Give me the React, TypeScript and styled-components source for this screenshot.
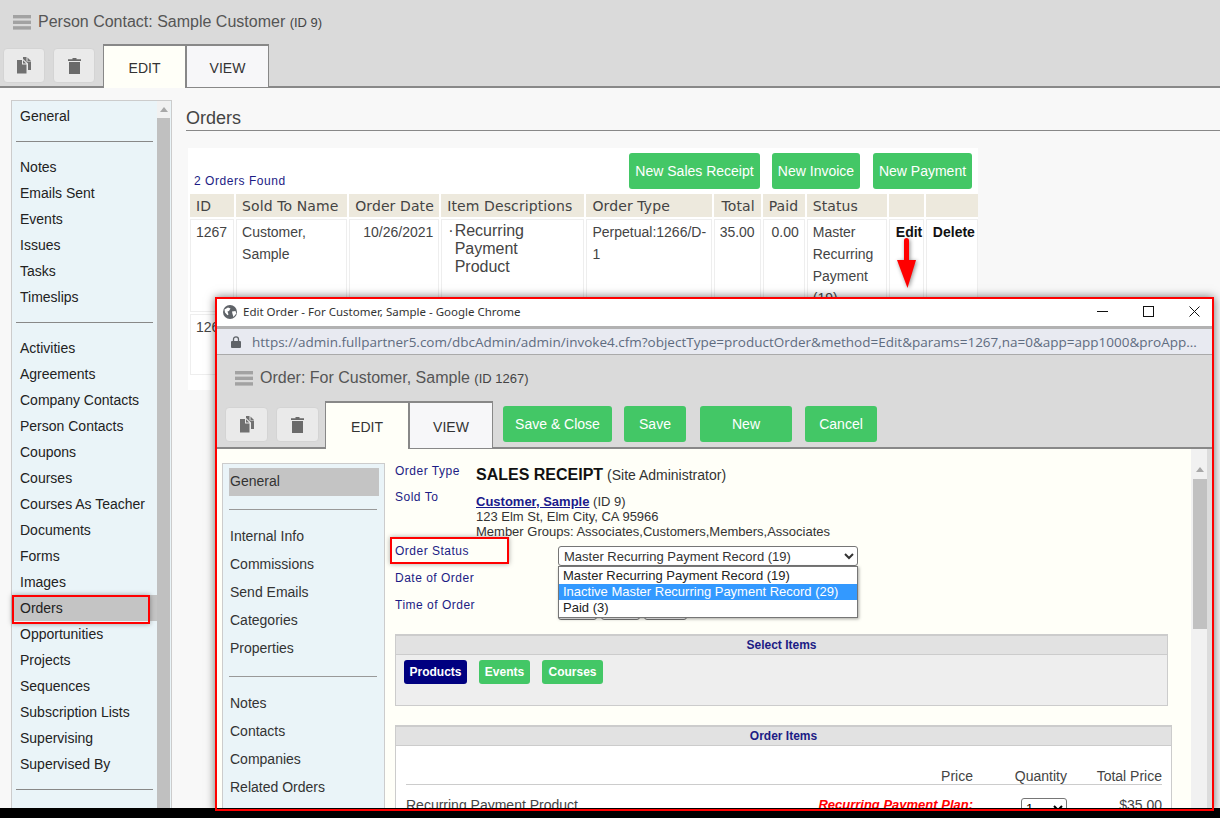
import styled, {createGlobalStyle} from "styled-components";
import {Fragment} from "react";

const GREEN = "#43c766";
const NAVY = "#1c1c85";

const GlobalStyle = createGlobalStyle`
  html, body {
    margin: 0;
    padding: 0;
    background: #000;
    font-family: "Liberation Sans", Arial, sans-serif;
    color: #333;
  }
  * { box-sizing: border-box; }
`

const Page = styled.div`
  position: relative;
  width: 1220px;
  height: 818px;
  background: #000;
  overflow: hidden;
`

const Screen = styled.div`
  width: 1220px;
  height: 808px;
  background: #f8f8f8;
  overflow: hidden;
  display: flex;
  flex-direction: column;
`

const Header = styled.header`
  flex: none;
  background: #dadada;
  border-bottom: 2px solid #888;
  height: 88px;
`

const HeaderCompact = styled(Header)`
  height: 94px;
`

const TitleRow = styled.div`
  display: flex;
  align-items: center;
  gap: 7px;
  height: 44px;
  padding-left: 13px;
  font-size: 16px;
  color: #555;
`

const PopupTitleRow = styled(TitleRow)`
  height: 46px;
  padding-left: 18px;
  gap: 7px;
`

const IdNote = styled.span`
  font-size: 13px;
  color: #444;
`

const TabRow = styled.div`
  display: flex;
  align-items: flex-end;
  height: 42px;
  padding-left: 3px;
`

const PopupTabRow = styled(TabRow)`
  height: 46px;
  padding-left: 8px;
`

const IconButton = styled.button`
  width: 42px;
  height: 35px;
  margin: 0 8px 3px 0;
  padding: 0;
  border: 1px solid #d4d4d4;
  border-radius: 4px;
  background: #eaeaea;
  display: flex;
  align-items: center;
  justify-content: center;
`

const PopupIconButton = styled(IconButton)`
  width: 43px;
  margin-bottom: 5px;

  &:nth-child(2) {
    margin-right: 6px;
  }
`

const Tab = styled.div<{$active?: boolean}>`
  width: 83px;
  height: 44px;
  margin-bottom: -2px;
  border: 1px solid #888;
  border-top-width: 2px;
  border-bottom: ${p => p.$active ? "none" : "1px solid #888"};
  background: ${p => p.$active ? "#fffff8" : "#f7f7f9"};
  color: #333;
  font-size: 14px;
  display: flex;
  align-items: center;
  justify-content: center;
  padding-top: 2px;
`

const PopupTab = styled(Tab)`
  height: 48px;
  width: 84px;
`

const GreenButton = styled.button<{$w: number; $gap?: number}>`
  width: ${p => p.$w}px;
  height: 36px;
  margin-left: ${p => p.$gap ?? 0}px;
  border: none;
  border-radius: 3px;
  background: ${GREEN};
  color: #fff;
  font: 14px "Liberation Sans", Arial, sans-serif;
  padding: 0;
`

const PopupActions = styled.div`
  display: flex;
  margin: 0 0 5px 10px;
`

const Body = styled.div`
  flex: 1;
  display: flex;
  padding: 12px 0 0 11px;
  min-height: 0;
`

const SideNav = styled.nav`
  flex: none;
  position: relative;
  width: 161px;
  height: 730px;
  border: 1px solid #ccc;
  background: #eaf4f8;
  font-size: 14px;
  color: #222;
  padding: 2px 14px 0 0;
`

const SideScroll = styled.div`
  position: absolute;
  top: 0;
  right: 1px;
  width: 13px;
  height: 100%;
  background: #f1f1f1;
  display: flex;
  flex-direction: column;
  align-items: center;
  padding-top: 6px;
`

const ScrollUp = styled.div`
  width: 0;
  height: 0;
  border-left: 4px solid transparent;
  border-right: 4px solid transparent;
  border-bottom: 5px solid #a8a8a8;
`

const SideThumb = styled.div`
  flex: 1;
  width: 13px;
  margin-top: 6px;
  background: #c0c0c0;
`

const NavItem = styled.div<{$selected?: boolean}>`
  height: 26px;
  line-height: 26px;
  margin-left: 2px;
  padding-left: 6px;
  white-space: nowrap;
  background: ${p => p.$selected ? "#c4c4c4" : "transparent"};
`

const NavRule = styled.div`
  height: 1px;
  margin: 12px 4px 12px 4px;
  background: #888;
`

const MainPane = styled.main`
  flex: 1;
  padding-left: 14px;
  min-width: 0;
`

const PaneTitle = styled.h2`
  margin: 0;
  height: 31px;
  line-height: 36px;
  border-bottom: 1px solid #888;
  font-size: 18px;
  font-weight: 400;
  color: #444;
`

const OrdersCard = styled.section`
  width: 790px;
  height: 242px;
  margin: 17px 0 0 2px;
  background: #fff;
  padding: 5px 0 0 0;
`

const OrdersTop = styled.div`
  display: flex;
  align-items: flex-end;
  height: 36px;
`

const FoundNote = styled.div`
  flex: 1;
  padding-left: 6px;
  font-size: 12px;
  letter-spacing: 0.55px;
  color: ${NAVY};
  line-height: 14px;
  margin-bottom: 1px;
`

const OrdersActions = styled.div`
  display: flex;
  margin-right: 6px;
`

const OrdersTable = styled.table`
  margin-top: 3px;
  border-collapse: separate;
  border-spacing: 2px 2px;
  table-layout: fixed;
  width: 792px;
`

const HeadCell = styled.th<{$right?: boolean}>`
  height: 23px;
  padding: 0 6px;
  background: #ede9dd;
  font: 400 14px "DejaVu Sans", Verdana, sans-serif;
  letter-spacing: 0.1px;
  color: #444;
  text-align: ${p => p.$right ? "right" : "left"};
  white-space: nowrap;
`

const Cell = styled.td<{$right?: boolean; $h?: number}>`
  height: ${p => p.$h ?? 93}px;
  padding: 1px 5px;
  vertical-align: top;
  border: 1px solid #eee;
  font-size: 14px;
  line-height: 22px;
  color: #444;
  text-align: ${p => p.$right ? "right" : "left"};
`

const ActionCell = styled(Cell)`
  padding: 1px 2px 1px 6px;
  font-weight: 700;
  color: #111;
`

const ItemLine = styled.div`
  display: flex;
  gap: 1px;
  font-size: 16px;
  line-height: 18px;
  padding: 1px 0 0 1px;
`

const ItemText = styled.span`
  width: 90px;
`

const Popup = styled.div`
  position: absolute;
  left: 215px;
  top: 297px;
  width: 999px;
  height: 514px;
  border: 2px solid #f00;
  box-shadow: 0 0 9px rgba(0, 0, 0, 0.55);
  background: #000;
  display: flex;
  flex-direction: column;
  overflow: hidden;
`

const PopupInner = styled.div`
  height: 509px;
  background: #d9d9d9;
  overflow: hidden;
  display: flex;
  flex-direction: column;
`

const WindowBar = styled.div`
  flex: none;
  height: 30px;
  background: #fff;
  border-bottom: 3px solid #b2b2b2;
  display: flex;
  align-items: center;
  padding: 0 0 2px 6px;
  gap: 10px;
  font: 11.5px "Noto Sans", "Open Sans", sans-serif;
  color: #333;
`

const WindowTitle = styled.span`
  flex: 1;
  margin-left: -4px;
`

const WindowControl = styled.span`
  width: 36px;
  display: flex;
  justify-content: center;
`

const UrlBar = styled.div`
  flex: none;
  height: 26px;
  background: #e8eaf1;
  border-bottom: 1px solid #aaa;
  display: flex;
  align-items: center;
  gap: 11px;
  padding-left: 14px;
  font: 13.5px "Open Sans", sans-serif;
  color: #5f6c80;
  white-space: nowrap;
  overflow: hidden;

  svg {
    flex: none;
  }
`

const PopupBody = styled.div`
  flex: 1;
  min-height: 0;
  display: flex;
  background: #fffff8;
`

const PopupNav = styled.nav`
  flex: none;
  width: 163px;
  height: 400px;
  margin: 14px 0 0 5px;
  border: 1px solid #ccc;
  border-bottom: none;
  background: #eaf4f8;
  padding: 4px 5px 0 6px;
  font-size: 14px;
  color: #333;
`

const PopupNavItem = styled.div<{$selected?: boolean}>`
  height: 28px;
  line-height: 27px;
  padding-left: 1px;
  background: ${p => p.$selected ? "#c4c4c4" : "transparent"};
`

const PopupNavRule = styled.div`
  height: 1px;
  margin: 13px 2px 13px 0;
  background: #999;
`

const FormArea = styled.div`
  flex: 1;
  min-width: 0;
  padding: 14px 0 0 10px;
  font-size: 14px;
  color: #333;
`

const FormRow = styled.div<{$h: number}>`
  display: grid;
  grid-template-columns: 81px 1fr;
  height: ${p => p.$h}px;
`

const FormLabel = styled.div`
  color: ${NAVY};
  font-size: 12px;
  letter-spacing: 0.5px;
  line-height: 16px;
`

const FormValue = styled.div`
  font-size: 13px;
  line-height: 15px;
  color: #333;
`

const ReceiptLine = styled(FormValue)`
  font-size: 14px;
  padding-top: 4px;
`

const ReceiptName = styled.strong`
  font-size: 16px;
  color: #111;
`

const CustomerLink = styled.a`
  font-size: 13px;
  font-weight: 700;
  color: #1a1a8c;
  text-decoration: underline;
`

const SoldTo = styled(FormValue)`
  padding-top: 5px;
`

const StatusWrap = styled.div`
  position: relative;
  width: 300px;
  margin: 3px 0 0 82px;
`

const StatusSelect = styled.select`
  display: block;
  width: 300px;
  height: 20px;
  padding: 0 0 0 1px;
  border: 1px solid #767676;
  border-radius: 3px;
  background: #fff;
  color: #333;
  font: 13px "Liberation Sans", Arial, sans-serif;
`

const StatusList = styled.div`
  position: absolute;
  left: 0;
  top: 20px;
  width: 300px;
  height: 52px;
  z-index: 2;
  background: #fff;
  border: 1px solid #767676;
  box-shadow: 1px 1px 3px rgba(0, 0, 0, 0.35);
  padding-top: 1px;
  font-size: 13px;
  color: #222;
`

const StatusOption = styled.div<{$selected?: boolean}>`
  height: 16px;
  line-height: 15px;
  padding-left: 4px;
  white-space: nowrap;
  background: ${p => p.$selected ? "#3399ff" : "transparent"};
  color: ${p => p.$selected ? "#fff" : "inherit"};
`

const TimeBoxes = styled.div`
  display: flex;
  gap: 4px;
  margin: 0 0 0 82px;
  padding-top: 3px;
`

const TimeBox = styled.div<{$w: number}>`
  width: ${p => p.$w}px;
  height: 20px;
  border: 1px solid #767676;
  border-radius: 3px;
  background: #fff;
`

const Panel = styled.section<{$w: number; $bg: string; $mt: number}>`
  width: ${p => p.$w}px;
  margin-top: ${p => p.$mt}px;
  border: 1px solid #ccc;
  border-top-width: 2px;
  background: ${p => p.$bg};
`

const PanelHead = styled.div`
  height: 19px;
  line-height: 18px;
  background: #e2e2e2;
  border-bottom: 1px solid #ccc;
  text-align: center;
  font-size: 12px;
  font-weight: 700;
  color: ${NAVY};
`

const PickerBody = styled.div`
  height: 50px;
  display: flex;
  align-items: flex-start;
  gap: 12px;
  padding: 5px 0 0 8px;
`

const PickerButton = styled.button<{$w: number; $navy?: boolean}>`
  width: ${p => p.$w}px;
  height: 24px;
  padding: 0;
  border: none;
  border-radius: 3px;
  background: ${p => p.$navy ? "#000080" : GREEN};
  color: #fff;
  font: 700 12px "Liberation Sans", Arial, sans-serif;
`

const ItemsGrid = styled.div`
  display: grid;
  grid-template-columns: 567px 94px 95px;
  padding: 22px 0 0 10px;
  height: 70px;
  font-size: 14px;
  color: #444;
`

const ItemsHeadCell = styled.div`
  text-align: right;
  height: 17px;
  line-height: 16px;
  border-bottom: 1px solid #ccc;
`

const ItemName = styled.div`
  padding-top: 12px;
  position: relative;
  white-space: nowrap;
  font-size: 14px;
  line-height: 16px;
`

const PlanNote = styled.span`
  position: absolute;
  right: 0;
  top: 12px;
  font-size: 13px;
  color: #f00;
  font-weight: 700;
  font-style: italic;
`

const QtyCell = styled.div`
  display: flex;
  justify-content: flex-end;
  padding-top: 13px;
`

const QtySelect = styled.select`
  width: 46px;
  height: 20px;
  border: 1px solid #767676;
  border-radius: 3px;
  background: #fff;
  font: 13px "Liberation Sans", Arial, sans-serif;
`

const TotalCell = styled.div`
  text-align: right;
  padding-top: 12px;
  font-size: 14px;
  line-height: 16px;
`

const PopupScroll = styled.div`
  flex: none;
  width: 21px;
  margin-left: 19px;
  background: #f1f1f1;
  border-right: 5px solid #dcdcdc;
  display: flex;
  flex-direction: column;
  align-items: flex-end;
  padding-top: 18px;
`

const PopupThumb = styled.div`
  width: 14px;
  height: 150px;
  margin-top: 7px;
  background: #c1c1c1;
`

const PopupScrollUp = styled(ScrollUp)`
  margin-right: 3px;
`

const Marker = styled.div<{$x: number; $y: number; $w: number; $h: number}>`
  position: absolute;
  left: ${p => p.$x}px;
  top: ${p => p.$y}px;
  width: ${p => p.$w}px;
  height: ${p => p.$h}px;
  border: 2px solid #f00;
  box-shadow: 0 0 5px rgba(0, 0, 0, 0.35);
  z-index: 5;
`

const ArrowMark = styled.svg`
  position: absolute;
  left: 894px;
  top: 238px;
  filter: drop-shadow(1px 1px 2px rgba(0, 0, 0, 0.45));
`

const BarsIcon = () => (
    <svg width="18" height="15" viewBox="0 0 18 15" fill="#a2a2a2">
        <rect y="0" width="18" height="3.4"/>
        <rect y="5.6" width="18" height="3.4"/>
        <rect y="11.2" width="18" height="3.4"/>
    </svg>
)

const CopyIcon = () => (
    <svg width="16" height="17" viewBox="0 0 16 17" fill="#707070">
        <path d="M7 0h3.5v4.5H15V13h-3V6.5L7 2z"/>
        <path d="M11.5 0.4 15 4h-3.5z"/>
        <path d="M1 3h5v4.5h4.5V16.500H1z"/>
        <path d="M7 3.300 10.200 6.500H7z"/>
    </svg>
)

const TrashIcon = () => (
    <svg width="13" height="16" viewBox="0 0 13 16" fill="#6a6a6a">
        <path d="M4.500 0h4v1.200H13V3H0V1.200h4.500z"/>
        <path d="M1 4h11v12H1z"/>
    </svg>
)

const GlobeIcon = () => (
    <svg width="14" height="14" viewBox="0 0 14 14">
        <circle cx="7" cy="7" r="7" fill="#5f6368"/>
        <path d="M1.500 4.500 5 2.500l2.500 1L6 6 4.500 6.500l1 3-1 .8L2 7.500zM9 6.500l3.500-.5.800 2.500-2.800 3.500L9.500 9z" fill="#fff"/>
    </svg>
)

const LockIcon = () => (
    <svg width="10" height="12" viewBox="0 0 10 12" fill="#5f6368">
        <path d="M1 5h8a1 1 0 0 1 1 1v5a1 1 0 0 1-1 1H1a1 1 0 0 1-1-1V6a1 1 0 0 1 1-1z"/>
        <path d="M2.500 5.500V3.300a2.500 2.500 0 0 1 5 0v2.200" fill="none" stroke="#5f6368" strokeWidth="1.300"/>
    </svg>
)

const MinimizeIcon = () => (
    <svg width="11" height="11" viewBox="0 0 11 11"><path d="M0 5.500h11" stroke="#111"/></svg>
)

const MaximizeIcon = () => (
    <svg width="11" height="11" viewBox="0 0 11 11"><rect x="0.500" y="0.500" width="10" height="10" fill="none" stroke="#111"/></svg>
)

const CloseIcon = () => (
    <svg width="11" height="11" viewBox="0 0 11 11"><path d="M0.500 0.500l10 10M10.500 0.500l-10 10" stroke="#111"/></svg>
)

const sideGroups = [
    ["General"],
    ["Notes", "Emails Sent", "Events", "Issues", "Tasks", "Timeslips"],
    ["Activities", "Agreements", "Company Contacts", "Person Contacts", "Coupons", "Courses", "Courses As Teacher",
        "Documents", "Forms", "Images", "Orders", "Opportunities", "Projects", "Sequences", "Subscription Lists",
        "Supervising", "Supervised By"],
]

const popupGroups = [
    ["General"],
    ["Internal Info", "Commissions", "Send Emails", "Categories", "Properties"],
    ["Notes", "Contacts", "Companies", "Related Orders"],
]

const columns = [44, 111, 90, 143, 125, 47, 42, 80, 35, 52]

const App = () => {
    return (
        <Page>
            <GlobalStyle/>
            <Screen>
                <Header>
                    <TitleRow>
                        <BarsIcon/>
                        <span>Person Contact: Sample Customer <IdNote>(ID 9)</IdNote></span>
                    </TitleRow>
                    <TabRow>
                        <IconButton><CopyIcon/></IconButton>
                        <IconButton><TrashIcon/></IconButton>
                        <Tab $active>EDIT</Tab>
                        <Tab>VIEW</Tab>
                    </TabRow>
                </Header>
                <Body>
                    <SideNav>
                        <SideScroll>
                            <ScrollUp/>
                            <SideThumb/>
                        </SideScroll>
                        {sideGroups.map((group, i) => (
                            <Fragment key={i}>
                                {group.map(name => (
                                    <NavItem key={name} $selected={name === "Orders"}>{name}</NavItem>
                                ))}
                                <NavRule/>
                            </Fragment>
                        ))}
                    </SideNav>
                    <MainPane>
                        <PaneTitle>Orders</PaneTitle>
                        <OrdersCard>
                            <OrdersTop>
                                <FoundNote>2 Orders Found</FoundNote>
                                <OrdersActions>
                                    <GreenButton $w={131}>New Sales Receipt</GreenButton>
                                    <GreenButton $w={88} $gap={12}>New Invoice</GreenButton>
                                    <GreenButton $w={99} $gap={13}>New Payment</GreenButton>
                                </OrdersActions>
                            </OrdersTop>
                            <OrdersTable>
                                <colgroup>
                                    {columns.map((w, i) => <col key={i} width={w}/>)}
                                </colgroup>
                                <thead>
                                    <tr>
                                        <HeadCell>ID</HeadCell>
                                        <HeadCell>Sold To Name</HeadCell>
                                        <HeadCell>Order Date</HeadCell>
                                        <HeadCell>Item Descriptions</HeadCell>
                                        <HeadCell>Order Type</HeadCell>
                                        <HeadCell $right>Total</HeadCell>
                                        <HeadCell>Paid</HeadCell>
                                        <HeadCell>Status</HeadCell>
                                        <HeadCell/>
                                        <HeadCell/>
                                    </tr>
                                </thead>
                                <tbody>
                                    <tr>
                                        <Cell>1267</Cell>
                                        <Cell>Customer, Sample</Cell>
                                        <Cell $right>10/26/2021</Cell>
                                        <Cell>
                                            <ItemLine>
                                                <span>·</span>
                                                <ItemText>Recurring Payment Product</ItemText>
                                            </ItemLine>
                                        </Cell>
                                        <Cell>Perpetual:1266/D-1</Cell>
                                        <Cell $right>35.00</Cell>
                                        <Cell $right>0.00</Cell>
                                        <Cell>Master Recurring Payment (19)</Cell>
                                        <ActionCell>Edit</ActionCell>
                                        <ActionCell>Delete</ActionCell>
                                    </tr>
                                    <tr>
                                        <Cell $h={61}>1266</Cell>
                                        <Cell $h={61}/>
                                        <Cell $h={61}/>
                                        <Cell $h={61}/>
                                        <Cell $h={61}/>
                                        <Cell $h={61}/>
                                        <Cell $h={61}/>
                                        <Cell $h={61}/>
                                        <Cell $h={61}/>
                                        <Cell $h={61}/>
                                    </tr>
                                </tbody>
                            </OrdersTable>
                        </OrdersCard>
                    </MainPane>
                </Body>
            </Screen>

            <ArrowMark width="26" height="52" viewBox="0 0 26 52">
                <path d="M10 2.500a2.500 2.500 0 0 1 5 0V22h7L13.500 50 3 22h7z" fill="#f00"/>
            </ArrowMark>
            <Marker $x={12} $y={595} $w={138} $h={29}/>

            <Popup>
                <PopupInner>
                    <WindowBar>
                        <GlobeIcon/>
                        <WindowTitle>Edit Order - For Customer, Sample - Google Chrome</WindowTitle>
                        <WindowControl><MinimizeIcon/></WindowControl>
                        <WindowControl><MaximizeIcon/></WindowControl>
                        <WindowControl><CloseIcon/></WindowControl>
                    </WindowBar>
                    <UrlBar>
                        <LockIcon/>
                        <span>https://admin.fullpartner5.com/dbcAdmin/admin/invoke4.cfm?objectType=productOrder&amp;method=Edit&amp;params=1267,na=0&amp;app=app1000&amp;proApp...</span>
                    </UrlBar>
                    <HeaderCompact>
                        <PopupTitleRow>
                            <BarsIcon/>
                            <span>Order: For Customer, Sample <IdNote>(ID 1267)</IdNote></span>
                        </PopupTitleRow>
                        <PopupTabRow>
                            <PopupIconButton><CopyIcon/></PopupIconButton>
                            <PopupIconButton><TrashIcon/></PopupIconButton>
                            <PopupTab $active>EDIT</PopupTab>
                            <PopupTab>VIEW</PopupTab>
                            <PopupActions>
                                <GreenButton $w={109}>Save &amp; Close</GreenButton>
                                <GreenButton $w={62} $gap={12}>Save</GreenButton>
                                <GreenButton $w={92} $gap={14}>New</GreenButton>
                                <GreenButton $w={72} $gap={13}>Cancel</GreenButton>
                            </PopupActions>
                        </PopupTabRow>
                    </HeaderCompact>
                    <PopupBody>
                        <PopupNav>
                            {popupGroups.map((group, i) => (
                                <Fragment key={i}>
                                    {group.map(name => (
                                        <PopupNavItem key={name} $selected={name === "General"}>{name}</PopupNavItem>
                                    ))}
                                    {i < popupGroups.length - 1 && <PopupNavRule/>}
                                </Fragment>
                            ))}
                        </PopupNav>
                        <FormArea>
                            <FormRow $h={26}>
                                <FormLabel>Order Type</FormLabel>
                                <ReceiptLine>
                                    <ReceiptName>SALES RECEIPT</ReceiptName> (Site Administrator)
                                </ReceiptLine>
                            </FormRow>
                            <FormRow $h={54}>
                                <FormLabel>Sold To</FormLabel>
                                <SoldTo>
                                    <CustomerLink>Customer, Sample</CustomerLink> (ID 9)<br/>
                                    123 Elm St, Elm City, CA 95966<br/>
                                    Member Groups: Associates,Customers,Members,Associates
                                </SoldTo>
                            </FormRow>
                            <FormRow $h={27}>
                                <FormLabel>Order Status</FormLabel>
                                <StatusWrap>
                                    <StatusSelect defaultValue="19">
                                        <option value="19">Master Recurring Payment Record (19)</option>
                                        <option value="29">Inactive Master Recurring Payment Record (29)</option>
                                        <option value="3">Paid (3)</option>
                                    </StatusSelect>
                                    <StatusList>
                                        <StatusOption>Master Recurring Payment Record (19)</StatusOption>
                                        <StatusOption $selected>Inactive Master Recurring Payment Record (29)</StatusOption>
                                        <StatusOption>Paid (3)</StatusOption>
                                    </StatusList>
                                </StatusWrap>
                            </FormRow>
                            <FormRow $h={27}>
                                <FormLabel>Date of Order</FormLabel>
                                <div/>
                            </FormRow>
                            <FormRow $h={27}>
                                <FormLabel>Time of Order</FormLabel>
                                <TimeBoxes>
                                    <TimeBox $w={39}/>
                                    <TimeBox $w={39}/>
                                    <TimeBox $w={43}/>
                                </TimeBoxes>
                            </FormRow>
                            <Panel $w={773} $bg="#eee" $mt={10}>
                                <PanelHead>Select Items</PanelHead>
                                <PickerBody>
                                    <PickerButton $w={63} $navy>Products</PickerButton>
                                    <PickerButton $w={51}>Events</PickerButton>
                                    <PickerButton $w={61}>Courses</PickerButton>
                                </PickerBody>
                            </Panel>
                            <Panel $w={777} $bg="#fff" $mt={19}>
                                <PanelHead>Order Items</PanelHead>
                                <ItemsGrid>
                                    <ItemsHeadCell>Price</ItemsHeadCell>
                                    <ItemsHeadCell>Quantity</ItemsHeadCell>
                                    <ItemsHeadCell>Total Price</ItemsHeadCell>
                                    <ItemName>
                                        Recurring Payment Product
                                        <PlanNote>Recurring Payment Plan:</PlanNote>
                                    </ItemName>
                                    <QtyCell>
                                        <QtySelect defaultValue="1"><option value="1">1</option></QtySelect>
                                    </QtyCell>
                                    <TotalCell>$35.00</TotalCell>
                                </ItemsGrid>
                            </Panel>
                        </FormArea>
                        <PopupScroll>
                            <PopupScrollUp/>
                            <PopupThumb/>
                        </PopupScroll>
                    </PopupBody>
                </PopupInner>
            </Popup>
            <Marker $x={390} $y={537} $w={119} $h={27}/>
        </Page>
    )
}

export default App
